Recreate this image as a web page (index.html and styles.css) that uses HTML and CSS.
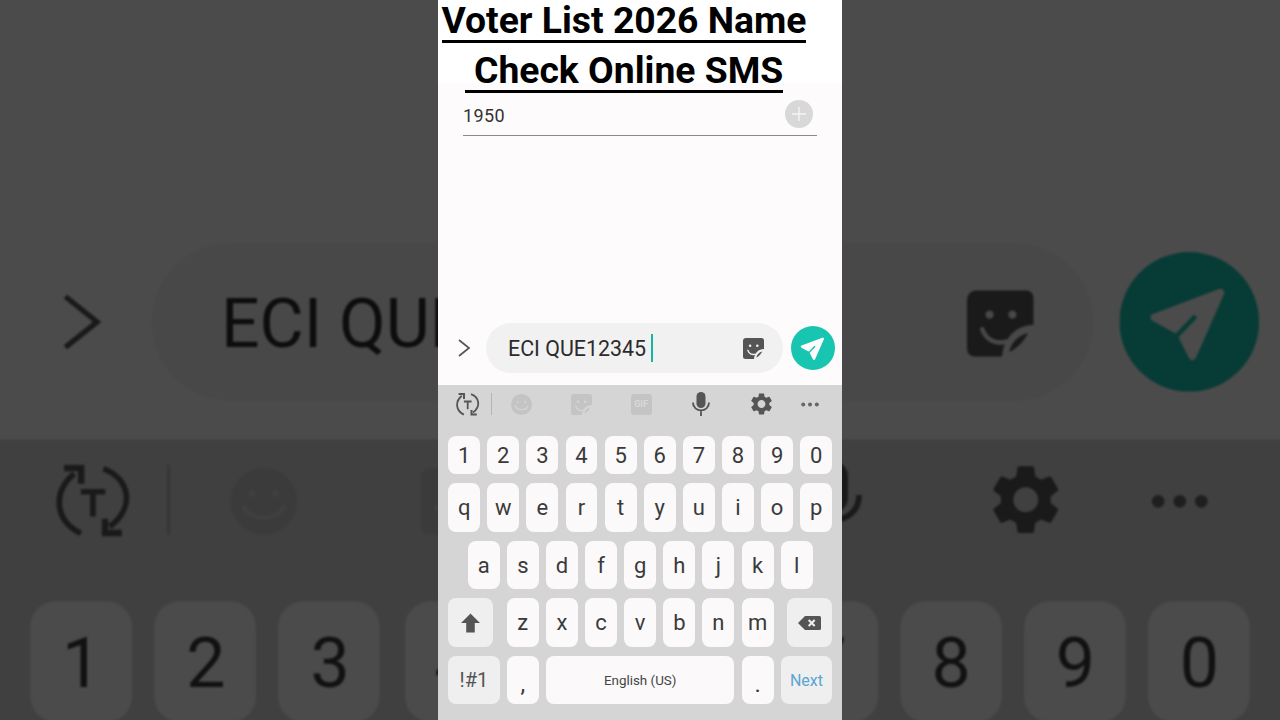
FILE: index.html
```html
<!DOCTYPE html>
<html lang="en">
<head>
<meta charset="utf-8">
<title>Voter List 2026 Name Check Online SMS</title>
<link rel="stylesheet" href="styles.css">
</head>
<body>
<svg class="defs" width="0" height="0" aria-hidden="true">
  <symbol id="i-chevron" viewBox="0 0 14 20"><path class="line" d="M2 2 12 10 2 18" stroke-width="1.700"/></symbol>
  <symbol id="i-sticker" viewBox="0 0 21 21">
    <path class="solid" d="M3 0H18.500A2.500 2.500 0 0 1 21 2.500V11C15.500 11 11.500 15 11 21H2.500A2.500 2.500 0 0 1 0 18.500V3A3 3 0 0 1 3 0Z"/>
    <path class="solid" d="M13.300 19.500C13.800 16.500 16.200 14.200 19.300 13.400 18 16 16 18.200 13.300 19.500Z"/>
    <circle class="cut" cx="7.100" cy="7.700" r="1.300"/><circle class="cut" cx="14.300" cy="7.700" r="1.300"/>
    <path class="cutline" d="M4.800 12.300C6 15.600 9 17.200 12.200 16.200" stroke-width="1.400"/>
  </symbol>
  <symbol id="i-send" viewBox="0 0 44 44">
    <circle cx="22" cy="22" r="22" fill="#18c5b0"/>
    <path d="M31.800 12.800 11 20.600 19 25 23 32.800Z" fill="#fdfbfc" stroke="#fdfbfc" stroke-width="2.400" stroke-linejoin="round"/>
    <path d="M16.500 28 24 20.200" stroke="#18c5b0" stroke-width="1.500" fill="none"/>
  </symbol>
  <symbol id="i-cycle" viewBox="0 0 24 24">
    <path class="line" d="M5.800 2.800C-1 8.500-.5 17.500 7.900 21.600" stroke-width="1.800"/>
    <path class="line" d="M15 1.200C23.500 4.500 25 13.500 17 19.500" stroke-width="1.800"/>
    <path class="solid" d="M2.600 0H9V6H7V2H2.600Z"/>
    <path class="solid" d="M14.500 17H16.500V20.500H20.800V22.500H14.500Z"/>
    <path class="line" d="M7.900 8.500H15.600M11.700 8.500V16.300" stroke-width="1.800"/>
  </symbol>
  <symbol id="i-emoji" viewBox="0 0 21 21">
    <circle class="solid" cx="10.500" cy="10.500" r="10.500"/>
    <circle class="cut" cx="6.800" cy="8" r="1.100"/><circle class="cut" cx="14.200" cy="8" r="1.100"/>
    <path class="cutline" d="M4.200 12.200C6 16.800 15 16.800 16.800 12.200" stroke-width="1.300"/>
  </symbol>
  <symbol id="i-mic" viewBox="0 0 18 24">
    <rect class="solid" x="4.500" y="0" width="9" height="16" rx="4.500"/>
    <path class="line" d="M1 10.500C1 21 17 21 17 10.500M9 18V24" stroke-width="1.800"/>
  </symbol>
  <symbol id="i-gear" viewBox="2.400 2 19.200 20">
    <path class="solid" fill-rule="evenodd" d="M19.140 12.940c.04-.3.06-.61.06-.94 0-.32-.02-.64-.07-.94l2.030-1.580c.18-.14.23-.41.12-.61l-1.920-3.320c-.12-.22-.37-.29-.59-.22l-2.390.96c-.5-.38-1.030-.7-1.620-.94L14.400 2.810c-.04-.24-.24-.41-.48-.41h-3.840c-.24 0-.43.17-.47.41L9.250 5.350c-.59.24-1.130.57-1.620.94L5.240 5.330c-.22-.08-.47 0-.59.22L2.740 8.870c-.12.21-.08.47.12.61l2.030 1.580c-.05.3-.09.63-.09.94s.02.64.07.94l-2.030 1.580c-.18.14-.23.41-.12.61l1.920 3.320c.12.22.37.29.59.22l2.390-.96c.5.38 1.030.7 1.620.94l.36 2.540c.05.24.24.41.48.41h3.840c.24 0 .44-.17.47-.41l.36-2.540c.59-.24 1.130-.56 1.620-.94l2.390.96c.22.08.47 0 .59-.22l1.920-3.320c.12-.22.07-.47-.12-.61l-2.010-1.580zM12 15.600c-1.980 0-3.600-1.620-3.600-3.600s1.620-3.600 3.600-3.600 3.600 1.620 3.600 3.600-1.620 3.600-3.600 3.600z"/>
  </symbol>
  <symbol id="i-dots" viewBox="0 0 18 5"><circle class="solid" cx="2.200" cy="2.500" r="2"/><circle class="solid" cx="9" cy="2.500" r="2"/><circle class="solid" cx="15.800" cy="2.500" r="2"/></symbol>
  <symbol id="i-shift" viewBox="0 0 20 20"><path class="solid" d="M10 0 20 10H14.500V20H5.500V10H0Z"/></symbol>
  <symbol id="i-back" viewBox="0 0 23 14">
    <path class="solid" d="M7 0H21.500A1.500 1.500 0 0 1 23 1.500V12.500A1.500 1.500 0 0 1 21.500 14H7L0 7Z"/>
    <path class="keycut" d="M10.700 4 16.700 10M16.700 4 10.700 10" stroke-width="2"/>
  </symbol>
</svg>

<main class="stage">
  <div class="backdrop" aria-hidden="true">
    <div class="phone">
      <div class="title"></div>
      <div class="screen"></div>
      <div class="composer">
        <svg class="chevron"><use href="#i-chevron"/></svg>
        <div class="field">
          <span class="draft">ECI QUE12345</span><span class="caret"></span>
          <svg class="sticker"><use href="#i-sticker"/></svg>
        </div>
        <svg class="send"><use href="#i-send"/></svg>
      </div>
      <div class="keyboard">
        <div class="toolbar">
          <span class="tool tool-cycle"><svg class="ic-cycle"><use href="#i-cycle"/></svg></span>
          <span class="divider"></span>
          <span class="tool tool-first faded"><svg class="ic-emoji"><use href="#i-emoji"/></svg></span>
          <span class="tool faded"><svg class="ic-sticker"><use href="#i-sticker"/></svg></span>
          <span class="tool"><span class="gif">GIF</span></span>
          <span class="tool"><svg class="ic-mic"><use href="#i-mic"/></svg></span>
          <span class="tool"><svg class="ic-gear"><use href="#i-gear"/></svg></span>
          <span class="tool tool-dots"><svg class="ic-dots"><use href="#i-dots"/></svg></span>
        </div>
        <div class="keys">
          <span class="key">1</span><span class="key">2</span><span class="key">3</span><span class="key">4</span><span class="key">5</span><span class="key">6</span><span class="key">7</span><span class="key">8</span><span class="key">9</span><span class="key">0</span>
        </div>
      </div>
    </div>
  </div>

  <div class="phone">
    <h1 class="title">
      <span class="title-row"><span class="title-line">Voter List 2026 Name</span></span>
      <span class="title-row"><span class="title-line">&nbsp;Check Online SMS</span></span>
    </h1>
    <div class="screen">
      <div class="recipient">
        <span class="number">1950</span>
        <span class="add"><svg class="ic-plus" viewBox="0 0 16 16"><path d="M8 0V16M0 8H16"/></svg></span>
      </div>
    </div>
    <div class="composer">
      <svg class="chevron"><use href="#i-chevron"/></svg>
      <div class="field">
        <span class="draft">ECI QUE12345</span><span class="caret"></span>
        <svg class="sticker"><use href="#i-sticker"/></svg>
      </div>
      <svg class="send"><use href="#i-send"/></svg>
    </div>
    <div class="keyboard">
      <div class="toolbar">
        <span class="tool tool-cycle"><svg class="ic-cycle"><use href="#i-cycle"/></svg></span>
        <span class="divider"></span>
        <span class="tool tool-first faded"><svg class="ic-emoji"><use href="#i-emoji"/></svg></span>
        <span class="tool faded"><svg class="ic-sticker"><use href="#i-sticker"/></svg></span>
        <span class="tool"><span class="gif">GIF</span></span>
        <span class="tool"><svg class="ic-mic"><use href="#i-mic"/></svg></span>
        <span class="tool"><svg class="ic-gear"><use href="#i-gear"/></svg></span>
        <span class="tool tool-dots"><svg class="ic-dots"><use href="#i-dots"/></svg></span>
      </div>
      <div class="keys">
        <span class="key">1</span><span class="key">2</span><span class="key">3</span><span class="key">4</span><span class="key">5</span><span class="key">6</span><span class="key">7</span><span class="key">8</span><span class="key">9</span><span class="key">0</span>
        <span class="key">q</span><span class="key">w</span><span class="key">e</span><span class="key">r</span><span class="key">t</span><span class="key">y</span><span class="key">u</span><span class="key">i</span><span class="key">o</span><span class="key">p</span>
        <span class="key key-indent">a</span><span class="key">s</span><span class="key">d</span><span class="key">f</span><span class="key">g</span><span class="key">h</span><span class="key">j</span><span class="key">k</span><span class="key">l</span>
        <span class="key key-fn key-shift"><svg class="ic-shift"><use href="#i-shift"/></svg></span>
        <span class="key">z</span><span class="key">x</span><span class="key">c</span><span class="key">v</span><span class="key">b</span><span class="key">n</span><span class="key">m</span>
        <span class="key key-fn key-back"><svg class="ic-back"><use href="#i-back"/></svg></span>
        <span class="key key-fn key-sym">!#1</span>
        <span class="key key-punct">,</span>
        <span class="key key-space">English (US)</span>
        <span class="key key-punct">.</span>
        <span class="key key-fn key-next">Next</span>
      </div>
    </div>
  </div>
</main>
</body>
</html>
```
FILE: styles.css
```css
* { box-sizing: border-box; }

html, body { margin: 0; padding: 0; }

body {
  font-family: Roboto, "Liberation Sans", sans-serif;
  overflow: hidden;
}

.defs { position: absolute; }

.line { fill: none; stroke: var(--ink, #555); stroke-linecap: butt; stroke-linejoin: miter; }
.solid { fill: var(--ink, #555); }
.cut { fill: var(--cut, #f1f1f1); }
.cutline { fill: none; stroke: var(--cut, #f1f1f1); stroke-linecap: round; }
.keycut { fill: none; stroke: #f0f0f0; }

.stage {
  position: relative;
  width: 1280px;
  height: 720px;
  overflow: hidden;
  display: flex;
  justify-content: center;
  background: #4d4b4c;
}

.backdrop {
  position: absolute;
  inset: 0;
  display: flex;
  justify-content: center;
  filter: blur(0.8px) brightness(0.3);
}

.backdrop .phone {
  flex: none;
  position: relative;
  transform-origin: 50% 0;
  transform: translateY(-783px) scale(3.175);
}

.phone {
  position: relative;
  width: 404px;
  height: 720px;
  flex: none;
  display: flex;
  flex-direction: column;
  background: #fdfbfc;
}

/* Title banner */
.title {
  position: relative;
  z-index: 1;
  flex: none;
  height: 83px;
  margin: 0;
  padding: 1px 32px 0 0;
  background: #fff;
  color: #000;
  font-size: 37.3px;
  font-weight: 700;
  line-height: 39px;
  text-align: center;
}

.title-row { display: block; height: 50px; }

.title-line {
  display: inline-block;
  vertical-align: top;
  border-bottom: 3px solid #000;
  white-space: nowrap;
}

/* Conversation */
.screen { flex: 1; padding: 0 25px; }

.recipient {
  display: flex;
  align-items: center;
  justify-content: space-between;
  height: 53px;
  padding: 12px 4px 0 0;
  border-bottom: 1px solid #8a8a8a;
}

.number { font-size: 18px; color: #333; letter-spacing: .4px; }

.add {
  width: 28px;
  height: 28px;
  margin-top: -2px;
  border-radius: 50%;
  background: #d8d8d8;
  display: flex;
  align-items: center;
  justify-content: center;
}

.ic-plus { width: 14px; height: 14px; fill: none; stroke: #f4f4f4; stroke-width: 1.6; }

/* Composer */
.composer {
  flex: none;
  height: 63px;
  padding: 1px 0 12px;
  display: flex;
  align-items: center;
}

.chevron { width: 14px; height: 20px; margin: 0 15px 0 19px; }

.field {
  width: 297px;
  height: 50px;
  padding: 0 19px 0 22px;
  border-radius: 25px;
  background: #f1f1f1;
  display: flex;
  align-items: center;
  --cut: #f1f1f1;
}

.draft { font-size: 21.4px; color: #2b2b2b; white-space: nowrap; }

.caret { width: 2px; height: 28px; margin-left: 5px; background: #17b3a3; }

.sticker { width: 21px; height: 21px; margin-left: auto; }

.send { width: 44px; height: 44px; margin-left: 7.5px; }

/* Keyboard */
.keyboard {
  flex: none;
  height: 335px;
  background: #d5d5d5;
  --cut: #d5d5d5;
}

.toolbar {
  height: 51px;
  padding: 0 0 12.5px 5px;
  display: flex;
  align-items: center;
}

.tool {
  flex: none;
  width: 60px;
  height: 38.5px;
  display: flex;
  align-items: center;
  justify-content: center;
}

.tool-cycle { width: 48px; padding: 2px 0 0 2px; }
.tool-first { width: 59px; }
.tool-dots { width: 38px; }

.faded { --ink: #c4c4c4; }

.divider { flex: none; width: 1px; height: 22px; background: #b4b4b4; }

.ic-cycle { width: 24px; height: 24px; }
.ic-emoji { width: 21px; height: 21px; }
.ic-sticker { width: 21px; height: 21px; }
.ic-mic { width: 18px; height: 24px; }
.ic-gear { width: 21px; height: 22px; }
.ic-dots { width: 18px; height: 5px; --ink: #666; }

.gif {
  width: 21px;
  height: 21px;
  border-radius: 3px;
  background: #c4c4c4;
  color: #d9d9d9;
  font-size: 9px;
  font-weight: 700;
  display: flex;
  align-items: center;
  justify-content: center;
}

.keys {
  padding: 0 9.8px 0 10.2px;
  display: grid;
  grid-template-columns: repeat(20, 1fr);
  grid-template-rows: 38px 49px 48px 49px 48px;
  gap: 9px 7.2px;
}

.key {
  grid-column: span 2;
  display: flex;
  align-items: center;
  justify-content: center;
  border-radius: 8px;
  background: #fbf9fa;
  color: #3a3a3a;
  font-size: 22px;
}

.key-indent { grid-column: 2 / span 2; }

.key-fn { grid-column: span 3; background: #efefef; }

.key-shift { width: 45px; justify-self: start; }
.key-back { width: 45px; justify-self: end; }

.key-sym { font-size: 20px; color: #555; }

.key-next { font-size: 16px; color: #5aa5d2; }

.key-space { grid-column: span 10; font-size: 13.4px; color: #444; }

.key-punct { font-size: 24px; padding-top: 8px; }

.ic-shift { width: 19px; height: 20px; }
.ic-back { width: 23px; height: 14px; }
```
